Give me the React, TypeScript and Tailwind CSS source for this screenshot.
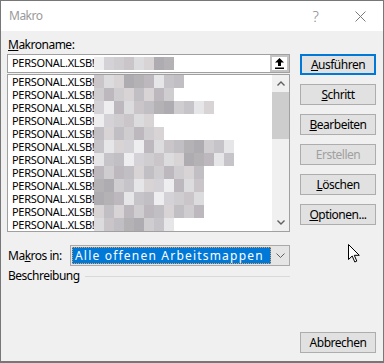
import { FC, ReactNode } from "react";

const mosaic = [
  "#c9c5c8",
  "#bcb8bd",
  "#d4d2d6",
  "#aeabb1",
  "#c2bfc4",
  "#dcdcde",
  "#e6e5e8",
  "#cfcdd0",
  "#b5b2b6",
  "#eeeef0",
  "#d8d4d6",
  "#c6c3c9",
];

// where the blurred part of each row stops (x in the screenshot)
const rowEnds = [185, 178, 218, 155, 160, 230, 238, 208, 208, 200, 208, 172];

const Blur: FC<{ seed: number; end: number }> = ({ seed, end }) => {
  const count = Math.max(1, Math.round((end - 94) / 10));
  return (
    <div className="flex h-full">
      {Array.from({ length: count }).map((_, i) => (
        <span
          key={i}
          className="h-full w-[10px]"
          style={{ background: mosaic[(seed * 7 + i * 5 + ((seed * i) % 3)) % mosaic.length] }}
        />
      ))}
    </div>
  );
};

const Btn: FC<{ children: ReactNode; primary?: boolean; disabled?: boolean }> = ({
  children,
  primary,
  disabled,
}) => (
  <button
    type="button"
    className={`flex h-[21px] w-[76px] items-center justify-center bg-[#e1e1e1] leading-none ${
      primary ? "border-2 border-[#0078d7]" : "border border-[#adadad]"
    } ${disabled ? "text-[#a0a0a0]" : "text-black"}`}
  >
    {children}
  </button>
);

export default function App() {
  return (
    <div className="relative flex h-[363px] w-[384px] flex-col border border-b-2 border-[#777777] bg-[#f0f0f0] font-['Noto_Sans',sans-serif] text-[12px] tracking-[-0.5px] text-black">
      {/* title bar */}
      <div className="flex h-[30px] shrink-0 items-center bg-white">
        <span className="pl-[8px] text-[#9a9a9a]">Makro</span>
        <div className="ml-auto flex h-full">
          <div className="flex w-[45px] items-center justify-center text-[15px] font-light text-[#8a8a8a]">?</div>
          <div className="flex w-[45px] items-center justify-center">
            <svg width="11" height="11" viewBox="0 0 11 11">
              <path d="M0.5 0.5 L10.5 10.5 M10.5 0.5 L0.5 10.5" stroke="#7a7a7a" strokeWidth="1" />
            </svg>
          </div>
        </div>
      </div>

      <div className="flex flex-1 flex-col pl-[6px] pr-[7px] pt-[6px] pb-[8px]">
        <div className="flex gap-[10px]">
          <div className="flex w-[283px] flex-col">
            <div className="h-[16px] pl-[1px] leading-[16px]">
              <span className="underline">M</span>akroname:
            </div>
            {/* name field */}
            <div className="mt-[1px] flex h-[19px] items-stretch border border-[#a0a0a0] bg-white">
              <div className="flex flex-1 items-center pl-[4px]">
                <span className="w-[82px] shrink-0 whitespace-nowrap text-[11px] tracking-[-0.3px]">
                  PERSONAL.XLSB!
                </span>
                <div className="h-[13px]">
                  <Blur seed={3} end={176} />
                </div>
              </div>
              <div className="flex w-[19px] items-center justify-center bg-[#c4c4c4] p-[2px]">
                <div className="flex h-full w-full items-center justify-center bg-white">
                  <svg width="9" height="11" viewBox="0 0 9 11">
                    <path d="M4.5 0 L9 4.5 H6 V8 H3 V4.5 H0 Z" fill="#000" />
                    <rect x="0" y="9.5" width="9" height="1.5" fill="#000" />
                  </svg>
                </div>
              </div>
            </div>
            {/* macro list */}
            <div className="mt-[1px] flex h-[158px] border border-[#a0a0a0] bg-white">
              <div className="flex-1 overflow-hidden pl-[4px]">
                {rowEnds.map((end, r) => (
                  <div key={r} className="flex h-[13px] items-center">
                    <span className="w-[82px] shrink-0 whitespace-nowrap text-[11px] leading-none tracking-[-0.3px]">
                      PERSONAL.XLSB!
                    </span>
                    <Blur seed={r} end={end} />
                  </div>
                ))}
              </div>
              <div className="flex w-[17px] flex-col bg-[#f0f0f0]">
                <div className="flex h-[17px] items-center justify-center">
                  <svg width="8" height="5" viewBox="0 0 8 5">
                    <path d="M0.5 4.5 L4 1 L7.5 4.5" stroke="#606060" strokeWidth="1.4" fill="none" />
                  </svg>
                </div>
                <div className="h-[47px] bg-[#cdcdcd]" />
                <div className="flex-1" />
                <div className="flex h-[17px] items-center justify-center">
                  <svg width="8" height="5" viewBox="0 0 8 5">
                    <path d="M0.5 0.5 L4 4 L7.5 0.5" stroke="#606060" strokeWidth="1.4" fill="none" />
                  </svg>
                </div>
              </div>
            </div>
          </div>

          <div className="mt-[17px] flex flex-col gap-[9px]">
            <Btn primary>
              <span className="underline">A</span>usführen
            </Btn>
            <Btn>
              <span className="underline">S</span>chritt
            </Btn>
            <Btn>
              <span className="underline">B</span>earbeiten
            </Btn>
            <Btn disabled>Erstellen</Btn>
            <Btn>
              <span className="underline">L</span>öschen
            </Btn>
            <Btn>
              <span className="underline">O</span>ptionen...
            </Btn>
          </div>
        </div>

        {/* macros in */}
        <div className="mt-[13px] flex h-[21px] w-[283px] items-center">
          <span className="w-[63px] shrink-0 pl-[1px]">
            Ma<span className="underline">k</span>ros in:
          </span>
          <div className="flex h-full flex-1 border border-[#a9a9a9] bg-[#e5e5e5]">
            <div className="m-[1px] flex flex-1 items-center border border-dotted border-[#e8a04c] bg-[#0078d7] pl-[2px] tracking-[1.2px] text-white">
              Alle offenen Arbeitsmappen
            </div>
            <div className="flex w-[17px] items-center justify-center">
              <svg width="9" height="5" viewBox="0 0 9 5">
                <path d="M0.5 0.5 L4.5 4.5 L8.5 0.5" stroke="#606060" strokeWidth="1" fill="none" />
              </svg>
            </div>
          </div>
        </div>

        {/* description */}
        <div className="mt-[2px] flex h-[16px] w-[283px] items-center">
          <span className="pl-[1px]">Beschreibung</span>
          <div className="ml-[5px] h-px flex-1 bg-[#d9d9d9]" />
        </div>

        <div className="flex-1" />
        <div className="flex justify-end">
          <Btn>Abbrechen</Btn>
        </div>
      </div>

      {/* mouse pointer */}
      <svg
        className="absolute left-[347px] top-[243px]"
        width="12"
        height="19"
        viewBox="0 0 12 19"
      >
        <path
          d="M0.5 0.5 L0.5 15.5 L4.2 12 L6.8 18 L8.8 17.1 L6.3 11.3 L11.3 11.3 Z"
          fill="#fff"
          stroke="#000"
          strokeWidth="1"
        />
      </svg>
    </div>
  );
}
